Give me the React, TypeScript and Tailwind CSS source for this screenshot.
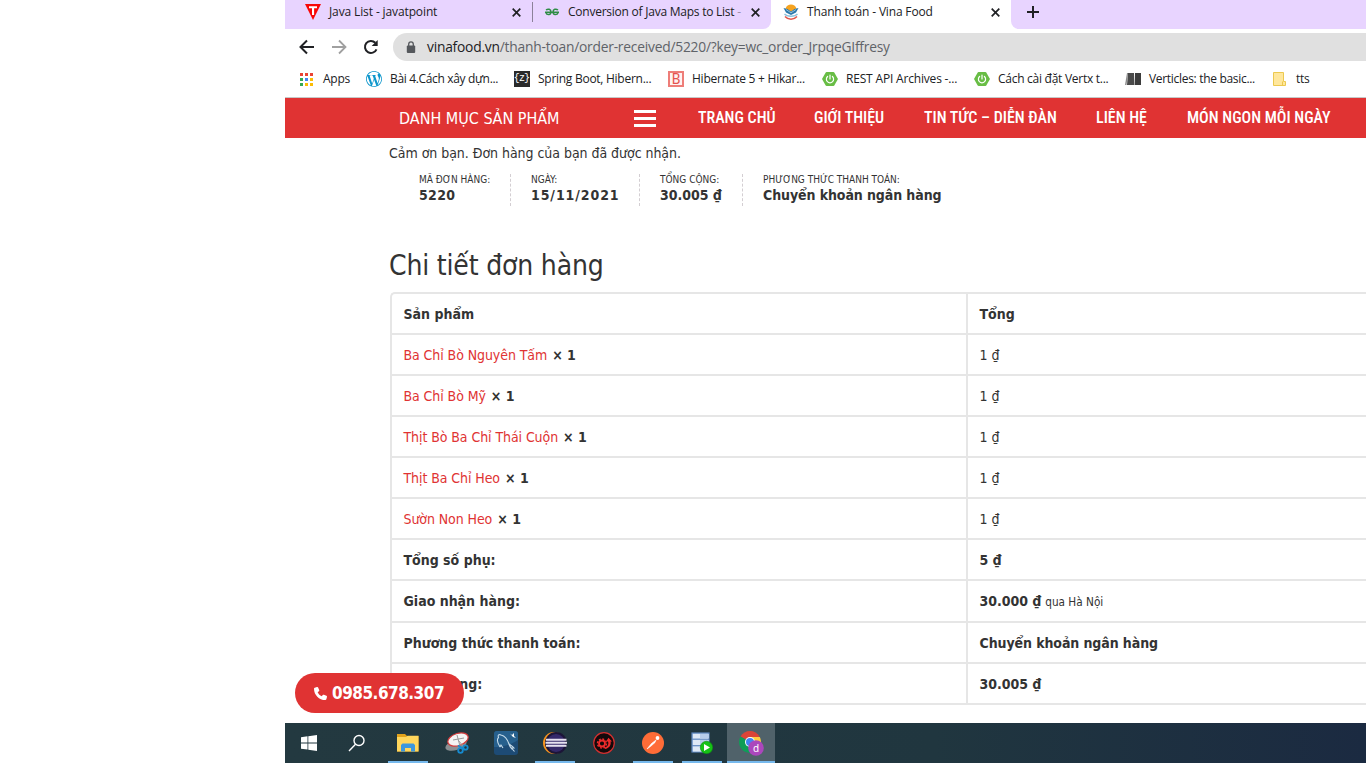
import type { ReactNode } from "react";
import { SiWordpress } from "react-icons/si";
import { FaPhone } from "react-icons/fa6";

const tahoma = "font-['DejaVu_Sans_Condensed','DejaVu_Sans',sans-serif] [font-stretch:75%]";

function Close() {
  return (
    <svg width="9" height="9" viewBox="0 0 9 9" className="shrink-0" stroke="#202124" strokeWidth="1.7">
      <path d="M.7.700 8.300 8.300M8.300.700.700 8.300" />
    </svg>
  );
}

function TabStrip() {
  return (
    <div className="flex h-[29px] shrink-0 text-[12px] leading-[24px] tracking-[-0.170px] text-[#202124]">
      <div className="flex w-[486px] rounded-br-[8px] bg-[#e8d4ff]">
        <div className="flex w-[247px] items-center pb-[5px] pl-5">
          <svg width="16" height="16" viewBox="0 0 16 16" className="shrink-0">
            <path d="M0 0H16L8 16Z" fill="#f80707" />
            <path d="M4 2.2H12V4.2H9.1V11H7V4.2H4Z" fill="#fff" />
          </svg>
          <span className="ml-2 w-[183px] whitespace-nowrap tracking-[-0.120px]">Java List - javatpoint</span>
          <Close />
        </div>
        <div className="mt-0.5 h-5 w-px bg-[#8c8199]" />
        <div className="flex w-[238px] items-center pb-[5px] pl-[11px]">
          <svg width="16" height="16" viewBox="0 0 16 16" className="shrink-0" fill="none" stroke="#2f8d46" strokeWidth="1.5">
            <path d="M1 8.300H15M2 6C4 4.500 7 5 7 8S3 11.600 1.800 8.500M14 6C12 4.500 9 5 9 8s4 3.600 5.200.500" />
          </svg>
          <span className="ml-2 w-[175px] whitespace-nowrap tracking-[-0.240px]">
            Conversion of Java Maps to List <span className="text-[#9b8fab]">-</span>
          </span>
          <span className="ml-2 flex">
            <Close />
          </span>
        </div>
      </div>
      <div className="flex w-[240px] items-center bg-white pb-[5px] pl-3">
        <svg width="16" height="16" viewBox="0 0 16 16" className="shrink-0">
          <path d="M2.500 4.800C4-.8 12-.8 13.500 4.800L8 7.500Z" fill="#f5a31f" />
          <path d="M.5 4 4.500 5 8 7.500 11.500 5 15.500 4 13 8.500 8 11 3 8.500Z" fill="#2b78ab" />
          <path d="M3 5.500 8 8.800 13 5.500" stroke="#d9edf7" strokeWidth=".6" fill="none" />
          <path d="M1.500 10C4 13 12 13 14.500 10" stroke="#8cc3dd" strokeWidth="1.300" fill="none" />
          <path d="M2 12.500C5 16 11 16 14 12.500" stroke="#e2574c" strokeWidth="1.500" fill="none" />
        </svg>
        <span className="ml-2 w-[184px] whitespace-nowrap">Thanh toán - Vina Food</span>
        <Close />
      </div>
      <div className="flex flex-1 items-center rounded-bl-[8px] bg-[#e8d4ff] pb-[5px] pl-4">
        <svg width="12" height="12" viewBox="0 0 12 12" stroke="#202124" strokeWidth="2">
          <path d="M6 0V12M0 6H12" />
        </svg>
      </div>
    </div>
  );
}

function AddressBar() {
  return (
    <div className="flex h-9 shrink-0 items-center pl-[14px]">
      <svg width="16" height="16" viewBox="0 0 16 16" fill="none" stroke="#202124" strokeWidth="2">
        <path d="M15 8H2M8 1.500 1.500 8 8 14.500" />
      </svg>
      <svg width="16" height="16" viewBox="0 0 16 16" fill="none" stroke="#a0a0a0" strokeWidth="1.800" className="ml-4">
        <path d="M1 8H14M8 1.500 14.500 8 8 14.500" />
      </svg>
      <svg width="16" height="16" viewBox="0 0 16 16" fill="none" stroke="#202124" strokeWidth="2" className="ml-4">
        <path d="M13.500 10.300A6 6 0 1 1 12.300 3.800" />
        <path d="M14.700 1V7H8.700Z" fill="#202124" stroke="none" />
      </svg>
      <div className="ml-[14px] flex h-7 flex-1 items-center rounded-l-[14px] bg-[#e0e0e0] pl-[13px]">
        <svg width="10" height="13" viewBox="0 0 10 13">
          <rect x="0.800" y="4.500" width="8.400" height="7.500" rx="1" fill="#55585c" />
          <path d="M2.700 5V3.200a2.300 2.300 0 0 1 4.600 0V5" fill="none" stroke="#55585c" strokeWidth="1.300" />
        </svg>
        <span className="ml-[11px] whitespace-nowrap pt-px text-[13.800px] tracking-[-0.220px] text-[#5f6368]">
          <span className="text-[#202124]">vinafood.vn</span>/thanh-toan/order-received/5220/?key=wc_order_JrpqeGIffresy
        </span>
      </div>
    </div>
  );
}

const dotColors = ["#ea4335", "#ea4335", "#ea4335", "#34a853", "#4285f4", "#fbbc05", "#34a853", "#fbbc05", "#fbbc05"];

function PowerHex() {
  return (
    <svg width="16" height="16" viewBox="0 0 16 16" className="shrink-0">
      <path d="M4.500 1H11.500L12.300 1.500 15.700 7.500V8.500L12.300 14.500 11.500 15H4.500L3.700 14.500.3 8.500V7.500L3.700 1.500Z" fill="#68bd45" />
      <path d="M5.600 5.500A3.600 3.600 0 1 0 10.400 5.500" fill="none" stroke="#fff" strokeWidth="1.200" strokeLinecap="round" />
      <path d="M8 4V8" stroke="#fff" strokeWidth="1.200" strokeLinecap="round" />
    </svg>
  );
}

function Bookmark({ icon, label, className }: { icon: ReactNode; label: string; className: string }) {
  return (
    <div className={`flex shrink-0 items-center gap-2 whitespace-nowrap ${className}`}>
      <span className="flex w-4 shrink-0 justify-center">{icon}</span>
      <span>{label}</span>
    </div>
  );
}

function Bookmarks() {
  return (
    <div className="flex h-[33px] shrink-0 items-center border-b border-[#c8c8c8] pb-1 pl-[14px] text-[12px] tracking-[-0.270px] text-[#202124]">
      <Bookmark
        className="w-[67px]"
        label="Apps"
        icon={
          <svg width="13" height="13" viewBox="0 0 13 13" className="mr-px shrink-0">
            {dotColors.map((c, i) => (
              <rect key={i} x={(i % 3) * 5} y={Math.floor(i / 3) * 5} width="3" height="3" fill={c} />
            ))}
          </svg>
        }
      />
      <Bookmark
        className="w-[148px] tracking-[-0.340px]"
        label="Bài 4.Cách xây dựn..."
        icon={<SiWordpress size={16} color="#0d96cc" />}
      />
      <Bookmark
        className="w-[154px]"
        label="Spring Boot, Hibern..."
        icon={
          <span className="flex size-4 shrink-0 items-center justify-center bg-[#2a2a2a] pr-px font-['Liberation_Mono',monospace] text-[10px] leading-none tracking-[-0.900px] text-white">
            {"{z}"}
          </span>
        }
      />
      <Bookmark
        className="w-[154px] tracking-[-0.240px]"
        label="Hibernate 5 + Hikar..."
        icon={
          <span className="flex size-4 shrink-0 items-center justify-center border-2 border-[#ee7d78] bg-[#fff3f2] font-['Roboto',sans-serif] text-[14px] leading-none tracking-normal text-[#e5534e]">
            B
          </span>
        }
      />
      <Bookmark className="w-[152px] tracking-[-0.180px]" label="REST API Archives -..." icon={<PowerHex />} />
      <Bookmark className="w-[151px]" label="Cách cài đặt Vertx t..." icon={<PowerHex />} />
      <Bookmark
        className="w-[147px] tracking-[-0.310px]"
        label="Verticles: the basic..."
        icon={
          <svg width="16" height="12" viewBox="0 0 16 12" className="shrink-0">
            <path d="M2 0 0 12H1.500L3 0Z" fill="#8a8a8a" />
            <path d="M3 0H9V12H2Z" fill="#4a4a4a" />
            <path d="M10 0H16V12H9.500Z" fill="#3c3c3c" />
          </svg>
        }
      />
      <Bookmark
        className="-mr-px"
        label="tts"
        icon={
          <svg width="13" height="14" viewBox="0 0 13 14" className="mr-0.5 shrink-0">
            <path d="M.5.500H10.500V9.500H12.500V13.500H.5Z" fill="#ffe79c" stroke="#ecc94f" />
            <path d="M9.500 13.500V9.500" stroke="#ecc94f" />
          </svg>
        }
      />
    </div>
  );
}

function NavBar() {
  return (
    <nav className="flex h-10 shrink-0 items-center whitespace-nowrap bg-[#e03333] pl-[114px] text-white">
      <div className={`${tahoma} w-[235px] pt-px text-[16px]`}>DANH MỤC SẢN PHẨM</div>
      <div className="flex w-[64px] flex-col gap-1">
        <div className="h-[3px] w-[22px] bg-white" />
        <div className="h-[3px] w-[22px] bg-white" />
        <div className="h-[3px] w-[22px] bg-white" />
      </div>
      <div className="flex font-['Roboto_Condensed','Roboto',sans-serif] text-[16px] font-medium [font-stretch:75%]">
        <span className="w-[116px]">TRANG CHỦ</span>
        <span className="w-[110px]">GIỚI THIỆU</span>
        <span className="w-[172px]">TIN TỨC – DIỄN ĐÀN</span>
        <span className="w-[91px]">LIÊN HỆ</span>
        <span>MÓN NGON MỖI NGÀY</span>
      </div>
    </nav>
  );
}

const summary = [
  { label: "MÃ ĐƠN HÀNG:", value: "5220", box: "w-[92px] border-r", track: "tracking-[0.300px]" },
  { label: "NGÀY:", value: "15/11/2021", box: "w-[109px] border-r", track: "tracking-[0.920px]" },
  { label: "TỔNG CỘNG:", value: "30.005 ₫", box: "w-[83px] border-r", track: "tracking-normal" },
  { label: "PHƯƠNG THỨC THANH TOÁN:", value: "Chuyển khoản ngân hàng", box: "", track: "tracking-[-0.090px]" },
];

const items = ["Ba Chỉ Bò Nguyên Tấm", "Ba Chỉ Bò Mỹ", "Thịt Bò Ba Chỉ Thái Cuộn", "Thịt Ba Chỉ Heo", "Sườn Non Heo"];

function Row({ left, right, tall }: { left: ReactNode; right: ReactNode; tall?: boolean }) {
  return (
    <div className={`flex shrink-0 items-center border-b-2 border-[#e6e6e6] ${tall ? "h-[42px]" : "h-[41px]"}`}>
      <div className={`flex h-full w-[576px] items-center border-r-2 border-[#e6e6e6] pl-[11.500px] ${tall ? "" : "pt-0.5"}`}>
        <span>{left}</span>
      </div>
      <div className={`pl-[11.500px] ${tall ? "" : "pt-0.5"}`}>{right}</div>
    </div>
  );
}

function Order() {
  return (
    <main className={`${tahoma} flex flex-col whitespace-nowrap pl-[105px] text-[14px] text-[#333]`}>
      <p className="-ml-0.5 h-9 pt-[5px] pl-px leading-5 tracking-[-0.040px]">Cảm ơn bạn. Đơn hàng của bạn đã được nhận.</p>
      <div className="flex gap-5 pl-[29px]">
        {summary.map((s) => (
          <div key={s.label} className={`h-8 border-dashed border-[#d3ced2] ${s.box}`}>
            <div className="text-[10px] leading-[11px]">{s.label}</div>
            <div className={`text-[14px] leading-5 font-bold ${s.track}`}>{s.value}</div>
          </div>
        ))}
      </div>
      <h2 className="mt-10 -ml-0.5 h-[46px] pt-px pl-px text-[28px] leading-[38px] tracking-[-0.180px]">Chi tiết đơn hàng</h2>
      <section className="flex flex-col rounded-tl-[5px] border-t-2 border-l-2 border-[#e6e6e6]">
        <Row left={<b>Sản phẩm</b>} right={<b>Tổng</b>} />
        {items.map((name) => (
          <Row
            key={name}
            left={
              <>
                <span className="mr-px tracking-[-0.080px] text-[#e03333]">{name}</span> <b>× 1</b>
              </>
            }
            right="1 ₫"
          />
        ))}
        <Row left={<b>Tổng số phụ:</b>} right={<b>5 ₫</b>} />
        <Row
          tall
          left={<b>Giao nhận hàng:</b>}
          right={
            <>
              <b>30.000 ₫</b> <span className="text-[11.700px]">qua Hà Nội</span>
            </>
          }
        />
        <Row
          left={<b>Phương thức thanh toán:</b>}
          right={<b className="tracking-[-0.090px]">Chuyển khoản ngân hàng</b>}
        />
        <Row left={<b>Tổng cộng:</b>} right={<b>30.005 ₫</b>} />
      </section>
    </main>
  );
}

function Task({ children, open, active }: { children: ReactNode; open?: boolean; active?: boolean }) {
  return (
    <div className={`flex shrink-0 flex-col items-center ${active ? "ml-px w-12 bg-[#50626a]" : "w-[49px]"}`}>
      <div className="flex h-[38px] items-center justify-center pt-0.5">{children}</div>
      {open && <div className={`h-0.5 bg-[#76b9ed] ${active ? "w-12" : "w-10"}`} />}
    </div>
  );
}

function TaskBar() {
  return (
    <footer className="flex h-10 shrink-0 bg-linear-to-r from-[#233940] via-[#20363f] via-60% to-[#1b2a41]">
      <div className="flex w-12 items-center justify-center">
        <svg width="16" height="16" viewBox="0 0 16 16" fill="#fff">
          <path d="M0 2.200 6.500 1.300V7.500H0ZM7.300 1.200 16 0V7.500H7.300ZM0 8.400H6.500V14.600L0 13.700ZM7.300 8.400H16V16L7.300 14.700Z" />
        </svg>
      </div>
      <div className="mr-0.5 flex w-12 items-center justify-center">
        <svg width="18" height="18" viewBox="0 0 18 18" fill="none" stroke="#fff" strokeWidth="1.400">
          <circle cx="11" cy="6.500" r="5" />
          <path d="M7.500 10.200 1 17" />
        </svg>
      </div>
      <Task open>
        <svg width="22" height="18" viewBox="0 0 22 18">
          <path d="M0 0H8L10 2H21.500V17.500H0Z" fill="#e2a21b" />
          <path d="M0 3H9L10.500 1.800H21.500V17.500H0Z" fill="#ffd65c" />
          <path d="M4 17.500V11L5.500 9.500H16.500L18 11V17.500H14V14H8V17.500Z" fill="#3c97dd" />
        </svg>
      </Task>
      <Task>
        <svg width="24" height="22" viewBox="0 0 24 22">
          <ellipse cx="11" cy="13" rx="11" ry="5" transform="rotate(-18 11 13)" fill="#8a8f92" />
          <ellipse cx="13" cy="7.500" rx="10.500" ry="6" transform="rotate(-18 13 7.500)" fill="#f4f4f4" stroke="#d43c3c" strokeWidth="1.200" />
          <path d="M12 3 15 14M8 8 19 6M13 8 19 15" stroke="#999" fill="none" />
          <circle cx="15.500" cy="18.500" r="2.300" fill="none" stroke="#168bd0" strokeWidth="1.800" />
          <circle cx="20.500" cy="15.500" r="2.200" fill="none" stroke="#168bd0" strokeWidth="1.800" />
          <path d="M13 13.500 19 17" stroke="#168bd0" strokeWidth="1.800" />
        </svg>
      </Task>
      <Task>
        <svg width="24" height="24" viewBox="0 0 24 24">
          <rect width="24" height="24" rx="3" fill="#1d4b75" />
          <path d="M0 3A3 3 0 0 1 3 0H21A3 3 0 0 1 24 3V9C17 14 8 16 0 16Z" fill="#27608d" />
          <path d="M6 16C3.500 12 3 8 4.500 6.500 3.500 4 5 3 7 4 11 5 13.500 8.500 15 13 17 14.500 18.500 15 20 17L17.500 17 20.500 20.500M6 16 7 14 9 17M15 13C15.500 15 17 17 18 18" fill="none" stroke="#c7dcea" strokeWidth="1.100" />
          <path d="M16 2.500 18 4 20 2 20 5 22 7 19 6Z" fill="#fff" />
        </svg>
      </Task>
      <Task open>
        <svg width="24" height="24" viewBox="0 0 24 24">
          <circle cx="11" cy="12" r="11" fill="#f7941e" />
          <circle cx="13" cy="12" r="11" fill="#1c1538" />
          <circle cx="13" cy="12" r="9" fill="#35296a" />
          <path d="M3 8.700H23.500M2.500 11.700H24M3 14.700H23.500" stroke="#e6e2f0" strokeWidth="1.900" />
        </svg>
      </Task>
      <Task>
        <svg width="24" height="24" viewBox="0 0 24 24">
          <circle cx="12" cy="12" r="10.300" fill="#15090b" stroke="#d32f2f" strokeWidth="1.200" />
          <circle cx="10" cy="12.500" r="3" fill="none" stroke="#ed2b2b" strokeWidth="1.800" />
          <circle cx="10" cy="12.500" r="4.500" fill="none" stroke="#ed2b2b" strokeWidth="1.500" strokeDasharray="1.900 1.600" />
          <path d="M12 16.500C16 16 17 13 16 10.500H14L16.500 6.800 20 10.500H18.500C19.500 14 17 17.500 13 18Z" fill="#ed2b2b" />
        </svg>
      </Task>
      <Task open>
        <svg width="22" height="22" viewBox="0 0 22 22">
          <circle cx="11" cy="11" r="11" fill="#ff6c37" />
          <path d="M5 17 9.500 11.500 14 8 13 10.500 8.500 14.500Z" fill="#fff" stroke="#fff" strokeWidth=".6" />
          <circle cx="15.500" cy="6" r="1.900" fill="#fff" />
        </svg>
      </Task>
      <Task open>
        <svg width="22" height="22" viewBox="0 0 22 22">
          <rect x="1" y="1" width="17" height="19" fill="#b9cfea" stroke="#5d86bd" strokeWidth="1.200" />
          <path d="M2 2H17.500V6.500H2ZM2 8H17.500V13H2ZM2 14.500H17.500V19.500H2Z" fill="#dfe9f6" />
          <path d="M1 7.200H18M1 13.700H18" stroke="#5d86bd" strokeWidth="1" />
          <path d="M9 2H17.500V6.500H9ZM9 8H17.500V13H9Z" fill="#b7cdeb" />
          <circle cx="15.500" cy="15.500" r="6.200" fill="#16c216" stroke="#0d8a12" strokeWidth=".6" />
          <path d="M13 12 19 15.500 13 19Z" fill="#fff" />
        </svg>
      </Task>
      <Task open active>
        <svg width="26" height="26" viewBox="0 0 26 26">
          <path d="M12 12 2.500 6.500A11 11 0 0 1 21.500 6.500Z" fill="#db4437" />
          <path d="M12 12V7H21.800A11 11 0 0 1 12 23Z" fill="#ffcd40" />
          <path d="M12 12 12 23A11 11 0 0 1 2.500 6.500Z" fill="#0f9d58" />
          <circle cx="12" cy="12" r="5" fill="#fff" />
          <circle cx="12" cy="12" r="4" fill="#4285f4" />
          <circle cx="18" cy="18" r="7.800" fill="#ab47bc" />
          <text x="18" y="21.500" fontSize="10" textAnchor="middle" fill="#fff" fontFamily="Noto Sans">
            d
          </text>
        </svg>
      </Task>
    </footer>
  );
}

export default function App() {
  return (
    <div className="relative h-[768px] w-[1366px] overflow-hidden bg-white pl-[285px] font-['Open_Sans',sans-serif]">
      <div className="flex h-[763px] flex-col">
        <TabStrip />
        <AddressBar />
        <Bookmarks />
        <NavBar />
        <div className="flex-1">
          <Order />
        </div>
        <TaskBar />
      </div>
      <div
        className={`${tahoma} absolute top-[673px] left-[295px] flex h-10 w-[169px] items-center rounded-full bg-[#e03333] pl-[19px] text-[17px] font-bold tracking-[-0.500px] text-white`}
      >
        <FaPhone size={13} />
        <span className="ml-[5px] pt-px">0985.678.307</span>
      </div>
    </div>
  );
}
